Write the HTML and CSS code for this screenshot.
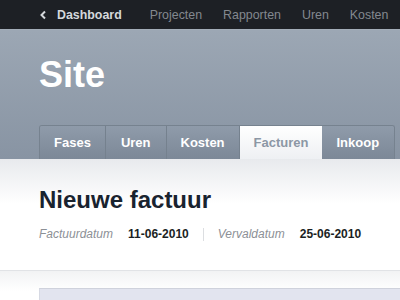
FILE: index.html
```html
<!DOCTYPE html>
<html lang="nl">
<head>
    <meta charset="UTF-8">
    <title>Nieuwe factuur</title>
    <link rel="stylesheet" href="styles.css">
</head>
<body>
    <div class="top-bar">
        <a class="back" href="#">
            <svg width="8" height="10" viewBox="0 0 8 10"><path d="M6 1.5 L2.5 5 L6 8.5" fill="none" stroke="#d5d8dc" stroke-width="2"/></svg>
            Dashboard
        </a>
        <span class="sep"></span>
        <a href="#">Projecten</a>
        <a href="#">Rapporten</a>
        <a href="#">Uren</a>
        <a href="#">Kosten</a>
    </div>

    <div class="site-head">
        <h1>Site</h1>
        <div class="tabs">
            <a href="#">Fases</a>
            <a href="#" class="wide">Uren</a>
            <a href="#">Kosten</a>
            <a href="#" class="active">Facturen</a>
            <a href="#">Inkoop</a>
        </div>
    </div>

    <div class="content">
        <h2>Nieuwe factuur</h2>
        <div class="meta">
            <span class="label">Factuurdatum</span>
            <span class="value">11-06-2010</span>
            <span class="divider"></span>
            <span class="label">Vervaldatum</span>
            <span class="value">25-06-2010</span>
        </div>
    </div>

    <div class="lower">
        <div class="panel"></div>
    </div>
</body>
</html>
```

FILE: styles.css
```css
body {
    margin: 0;
    padding: 0;
    background-color: white;
    font-family: "Liberation Sans", Arial, sans-serif;
    overflow: hidden;
}
a {
    text-decoration: none;
}
.top-bar {
    background-color: #1d2025;
    height: 29px;
    border-bottom: 1px solid #a3adb8;
    display: flex;
    align-items: center;
    padding-left: 39px;
    font-size: 12.4px;
}
.top-bar a {
    color: #83888f;
    margin-right: 21px;
}
.top-bar .back {
    color: #d5d8dc;
    font-weight: bold;
    display: flex;
    align-items: center;
    gap: 10px;
    margin-right: 13px;
}
.top-bar .sep {
    width: 1px;
    height: 14px;
    background-color: #2e3238;
    margin-right: 15px;
}
.site-head {
    background: linear-gradient(#9ca7b4, #8894a3);
    padding: 24px 0 0 39px;
}
.site-head h1 {
    margin: 0 0 29px;
    color: white;
    font-size: 36px;
    line-height: 42px;
    font-weight: bold;
}
.tabs {
    display: flex;
    width: 354px;
    border: 1px solid #76828f;
    border-bottom: none;
    border-radius: 3px 3px 0 0;
    overflow: hidden;
}
.tabs a {
    color: white;
    font-size: 13px;
    font-weight: bold;
    line-height: 33px;
    padding: 0 14px;
    background: linear-gradient(#8f9baa, #7c8897);
    border-right: 1px solid #75818e;
}
.tabs a.wide {
    padding: 0 15px;
}
.tabs a:last-child {
    border-right: none;
    flex: 1;
}
.tabs a.active {
    background: linear-gradient(white, #eef0f3);
    color: #8c97a5;
    border-right: none;
    padding: 0 14px;
}
.content {
    background: linear-gradient(#e8eaed, white 45px);
    padding: 26px 0 29px 39px;
    border-bottom: 1px solid #e1e3e6;
}
.content h2 {
    margin: 0;
    color: #19232f;
    font-size: 24px;
    line-height: 30px;
}
.meta {
    display: flex;
    align-items: center;
    font-size: 12px;
    margin-top: 12px;
}
.meta .label {
    color: #8c9096;
    font-style: italic;
    margin-right: 15px;
}
.meta .value {
    color: #1b1f24;
    font-weight: bold;
}
.meta .divider {
    width: 1px;
    height: 13px;
    background-color: #dcdee1;
    margin: 0 14px;
}
.lower {
    background: linear-gradient(#f2f3f4, white 20px);
    padding: 17px 0 0 39px;
    height: 40px;
}
.panel {
    background-color: #e2e4ef;
    border-top: 1px solid #cfd2dc;
    border-left: 1px solid #d6d9e3;
    height: 40px;
}
```
